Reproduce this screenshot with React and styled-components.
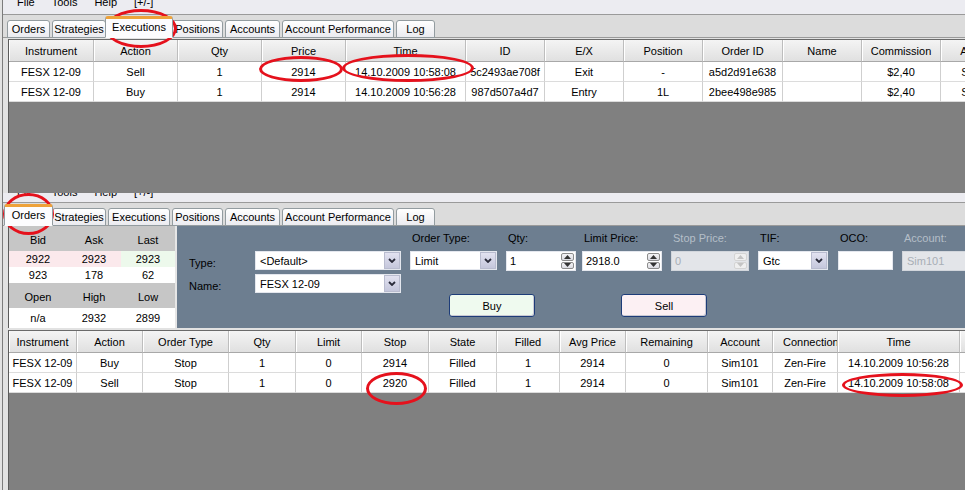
import React from 'react';
import styled, { createGlobalStyle } from 'styled-components';

const GlobalStyle = createGlobalStyle`
  *, *::before, *::after { box-sizing: border-box; }
  html, body { margin: 0; padding: 0; }
  body {
    font-family: "Liberation Sans", Arial, sans-serif;
    font-size: 11px;
    color: #000;
    background: #e2e2e2;
  }
`;

const execColumns = [
  { h: 'Instrument', w: 85 },
  { h: 'Action', w: 84 },
  { h: 'Qty', w: 84 },
  { h: 'Price', w: 84 },
  { h: 'Time', w: 120 },
  { h: 'ID', w: 79 },
  { h: 'E/X', w: 79 },
  { h: 'Position', w: 79 },
  { h: 'Order ID', w: 80 },
  { h: 'Name', w: 79 },
  { h: 'Commission', w: 79 },
  { h: 'Account', w: 79 },
];

const execRows = [
  ['FESX 12-09', 'Sell', '1', '2914', '14.10.2009 10:58:08', '5c2493ae708f', 'Exit', '-', 'a5d2d91e638', '', '$2,40', 'Sim101'],
  ['FESX 12-09', 'Buy', '1', '2914', '14.10.2009 10:56:28', '987d507a4d7', 'Entry', '1L', '2bee498e985', '', '$2,40', 'Sim101'],
];

const orderColumns = [
  { h: 'Instrument', w: 68 },
  { h: 'Action', w: 66 },
  { h: 'Order Type', w: 86 },
  { h: 'Qty', w: 67 },
  { h: 'Limit', w: 66 },
  { h: 'Stop', w: 67 },
  { h: 'State', w: 68 },
  { h: 'Filled', w: 63 },
  { h: 'Avg Price', w: 66 },
  { h: 'Remaining', w: 82 },
  { h: 'Account', w: 65 },
  { h: 'Connection', w: 65, clip: true },
  { h: 'Time', w: 122 },
  { h: '', w: 40 },
];

const orderRows = [
  ['FESX 12-09', 'Buy', 'Stop', '1', '0', '2914', 'Filled', '1', '2914', '0', 'Sim101', 'Zen-Fire', '14.10.2009 10:56:28', ''],
  ['FESX 12-09', 'Sell', 'Stop', '1', '0', '2920', 'Filled', '1', '2914', '0', 'Sim101', 'Zen-Fire', '14.10.2009 10:58:08', ''],
];

const tabs = [
  { label: 'Orders', w: 43 },
  { label: 'Strategies', w: 54 },
  { label: 'Executions', w: 62 },
  { label: 'Positions', w: 51 },
  { label: 'Accounts', w: 55 },
  { label: 'Account Performance', w: 112 },
  { label: 'Log', w: 39 },
];

const menu = ['File', 'Tools', 'Help', '[+/-]'];

const Screen = styled.div`
  position: relative;
  width: 965px;
  height: 490px;
  overflow: hidden;
  background: #e2e2e2;
`;

const Frame = styled.div`
  height: 100%;
  margin-left: 2px;
  border-left: 1px solid #7c7c7c;
  display: flex;
  flex-direction: column;
`;

const Window = styled.section`
  display: flex;
  flex-direction: column;
  ${(p) => (p.$height ? `height: ${p.$height}px; flex: none;` : 'flex: 1; min-height: 0;')}
`;

const MenuBar = styled.div`
  flex: none;
  height: ${(p) => p.$h}px;
  background: #ececf1;
  border-bottom: 1px solid #9a9a9a;
  overflow: hidden;
  display: flex;
  gap: 17px;
  padding-left: 14px;
`;

const MenuItem = styled.span`
  margin-top: ${(p) => p.$shift}px;
  line-height: 13px;
  white-space: nowrap;
`;

const TabStrip = styled.div`
  flex: none;
  height: 23px;
  background: #dcdcdc;
  border-bottom: 1px solid #9a9a9a;
  display: flex;
  align-items: flex-end;
  gap: 2px;
  padding-left: 4px;
`;

const Tab = styled.div`
  flex: none;
  width: ${(p) => p.$w + (p.$active ? 6 : 0)}px;
  height: ${(p) => (p.$active ? 22 : 18)}px;
  margin: 0 ${(p) => (p.$active ? -3 : 0)}px -1px;
  display: flex;
  align-items: center;
  justify-content: center;
  white-space: nowrap;
  background: ${(p) => (p.$active ? '#fcfcfe' : 'linear-gradient(#ffffff, #ebebf0)')};
  border: 1px solid #939ca0;
  border-top: ${(p) => (p.$active ? '3px solid #eea23a' : '1px solid #939ca0')};
  border-bottom: ${(p) => (p.$active ? '1px solid #fcfcfe' : '1px solid #939ca0')};
  border-radius: 3px 3px 0 0;
  position: relative;
  z-index: ${(p) => (p.$active ? 1 : 0)};
  padding-bottom: ${(p) => (p.$active ? 2 : 0)}px;
`;

const Well = styled.div`
  flex: 1;
  min-height: 0;
  margin: ${(p) => p.$top}px 0 0 5px;
  background: #808080;
  border-left: 1px solid #5b5b5b;
  border-top: 1px solid #6a6a6a;
  overflow: hidden;
`;

const Grid = styled.table`
  border-collapse: separate;
  border-spacing: 0;
  table-layout: fixed;
  width: ${(p) => p.$width}px;
  background: #fff;
`;

const HeadCell = styled.th`
  height: 22px;
  padding: ${(p) => (p.$clip ? '0 0 0 10px' : '0 2px')};
  font-weight: normal;
  text-align: ${(p) => (p.$clip ? 'left' : 'center')};
  white-space: nowrap;
  overflow: hidden;
  background: linear-gradient(#f4f4f4, #e0e0e0);
  border-right: 1px solid #bdbdbd;
  border-bottom: 1px solid #a8a8a8;
  box-shadow: inset 1px 0 #ffffff;
`;

const Cell = styled.td`
  height: 20px;
  padding: 0 2px;
  text-align: center;
  white-space: nowrap;
  overflow: hidden;
  border-right: 1px solid #cfcfcf;
  border-bottom: 1px solid #dcdcdc;
`;

const OrderRow = styled.div`
  flex: none;
  height: 102px;
  margin-left: 5px;
  border-left: 1px solid #5b5b5b;
  display: flex;
  gap: 2px;
  background: #e6e6e6;
`;

const QuoteBox = styled.div`
  flex: none;
  width: 166px;
  background: #fff;
  display: grid;
  grid-template-columns: 58px 54px 54px;
  grid-template-rows: 25px 16px 16px 25px 19px;
`;

const tones = {
  head: '#c6c6c6',
  bid: '#fbe9ec',
  last: '#edf9ec',
  plain: '#ffffff',
};

const QCell = styled.div`
  display: flex;
  align-items: center;
  justify-content: center;
  background: ${(p) => tones[p.$tone]};
  padding-top: ${(p) => (p.$tone === 'head' ? 3 : 0)}px;
`;

const EntryPanel = styled.div`
  flex: 1;
  min-width: 0;
  background: #6d7e90;
  padding: 5px 0 0 12px;
  display: flex;
  flex-direction: column;
  overflow: hidden;
`;

const TopRow = styled.div`
  display: flex;
  align-items: flex-start;
`;

const NameBlock = styled.div`
  flex: none;
  width: 212px;
  margin-top: 20px;
  display: grid;
  grid-template-columns: 66px 146px;
  row-gap: 4px;
`;

const SideLabel = styled.span`
  align-self: center;
  padding-top: 4px;
`;

const Field = styled.div`
  flex: none;
  width: ${(p) => p.$w}px;
  margin-left: ${(p) => p.$ml}px;
  display: flex;
  flex-direction: column;
  gap: 6px;
`;

const FieldLabel = styled.span`
  line-height: 14px;
  padding-left: 2px;
  white-space: nowrap;
  color: ${(p) => (p.$disabled ? '#b5bec8' : '#000')};
`;

const Combo = styled.div`
  height: 19px;
  display: flex;
  background: #fff;
  border: 1px solid #e4e7ee;
`;

const BoxText = styled.span`
  flex: 1;
  min-width: 0;
  display: flex;
  align-items: center;
  padding-left: ${(p) => p.$pad ?? 4}px;
  white-space: nowrap;
  overflow: hidden;
  color: ${(p) => (p.$disabled ? '#a8aeb6' : '#000')};
`;

const ComboButton = styled.span`
  flex: none;
  width: 16px;
  display: flex;
  align-items: center;
  justify-content: center;
  background: linear-gradient(#e2e2f0, #c5c7dc);
  border: 1px solid #b9bccf;
`;

const SpinBox = styled.div`
  height: 20px;
  display: flex;
  background: ${(p) => (p.$disabled ? '#e3e5e9' : '#fff')};
  border: 1px solid ${(p) => (p.$disabled ? '#d2d6dc' : '#e4e7ee')};
`;

const SpinButtons = styled.div`
  flex: none;
  width: 15px;
  padding: 1px;
  display: flex;
  flex-direction: column;
  gap: 1px;
`;

const SpinArrow = styled.span`
  flex: 1;
  display: flex;
  align-items: center;
  justify-content: center;
  border: 1px solid ${(p) => (p.$disabled ? '#d4d4d4' : '#8c8c8c')};
  border-radius: 2px;
  background: ${(p) => (p.$disabled ? '#efefef' : 'linear-gradient(#f4f4f6, #dcdce2)')};
`;

const ButtonRow = styled.div`
  display: flex;
  gap: 86px;
  padding-left: 260px;
  margin-top: 1px;
`;

const ActionButton = styled.button`
  width: 86px;
  height: 23px;
  padding: 0;
  font: inherit;
  color: #000;
  background: ${(p) => p.$tint};
  border: 1px solid #1d3c78;
  border-radius: 3px;
  box-shadow: inset -1px -1px #c9c9d2;
`;

const Mark = styled.div`
  position: absolute;
  left: ${(p) => p.$x}px;
  top: ${(p) => p.$y}px;
  width: ${(p) => p.$w}px;
  height: ${(p) => p.$h}px;
  border: 3px solid #e5111c;
  border-radius: 50%;
  pointer-events: none;
`;

const Chevron = () => (
  <svg width="8" height="5" viewBox="0 0 8 5">
    <path d="M1 1 L4 4 L7 1" fill="none" stroke="#2a2b3a" strokeWidth="1.8" />
  </svg>
);

const Arrow = ({ up, disabled }) => (
  <svg width="7" height="4" viewBox="0 0 7 4">
    <path d={up ? 'M0 4 L3.5 0 L7 4Z' : 'M0 0 L7 0 L3.5 4Z'} fill={disabled ? '#c4c4c4' : '#333'} />
  </svg>
);

const Select = ({ value }) => (
  <Combo>
    <BoxText>{value}</BoxText>
    <ComboButton>
      <Chevron />
    </ComboButton>
  </Combo>
);

const Spinner = ({ value, disabled }) => (
  <SpinBox $disabled={disabled}>
    <BoxText $pad={3} $disabled={disabled}>{value}</BoxText>
    <SpinButtons>
      <SpinArrow $disabled={disabled}><Arrow up disabled={disabled} /></SpinArrow>
      <SpinArrow $disabled={disabled}><Arrow disabled={disabled} /></SpinArrow>
    </SpinButtons>
  </SpinBox>
);

const Tabs = ({ active }) => (
  <TabStrip>
    {tabs.map((t) => (
      <Tab key={t.label} $w={t.w} $active={t.label === active}>
        {t.label}
      </Tab>
    ))}
  </TabStrip>
);

const DataGrid = ({ columns, rows }) => {
  const width = columns.reduce((s, c) => s + c.w, 0);
  return (
    <Grid $width={width}>
      <colgroup>
        {columns.map((c, i) => (
          <col key={i} style={{ width: c.w }} />
        ))}
      </colgroup>
      <thead>
        <tr>
          {columns.map((c, i) => (
            <HeadCell key={i} $clip={c.clip}>{c.h}</HeadCell>
          ))}
        </tr>
      </thead>
      <tbody>
        {rows.map((r, ri) => (
          <tr key={ri}>
            {r.map((v, ci) => (
              <Cell key={ci}>{v}</Cell>
            ))}
          </tr>
        ))}
      </tbody>
    </Grid>
  );
};

const App = () => {
  return (
    <Screen>
      <GlobalStyle />
      <Frame>
        <Window $height={193}>
          <MenuBar $h={15}>
            {menu.map((m) => (
              <MenuItem key={m} $shift={-4}>{m}</MenuItem>
            ))}
          </MenuBar>
          <Tabs active="Executions" />
          <Well $top={1}>
            <DataGrid columns={execColumns} rows={execRows} />
          </Well>
        </Window>

        <Window>
          <MenuBar $h={10}>
            {menu.map((m) => (
              <MenuItem key={m} $shift={-7}>{m}</MenuItem>
            ))}
          </MenuBar>
          <Tabs active="Orders" />
          <OrderRow>
            <QuoteBox>
              <QCell $tone="head">Bid</QCell>
              <QCell $tone="head">Ask</QCell>
              <QCell $tone="head">Last</QCell>
              <QCell $tone="bid">2922</QCell>
              <QCell $tone="bid">2923</QCell>
              <QCell $tone="last">2923</QCell>
              <QCell $tone="plain">923</QCell>
              <QCell $tone="plain">178</QCell>
              <QCell $tone="plain">62</QCell>
              <QCell $tone="head">Open</QCell>
              <QCell $tone="head">High</QCell>
              <QCell $tone="head">Low</QCell>
              <QCell $tone="plain">n/a</QCell>
              <QCell $tone="plain">2932</QCell>
              <QCell $tone="plain">2899</QCell>
            </QuoteBox>

            <EntryPanel>
              <TopRow>
                <NameBlock>
                  <SideLabel>Type:</SideLabel>
                  <Select value="<Default>" />
                  <SideLabel>Name:</SideLabel>
                  <Select value="FESX 12-09" />
                </NameBlock>
                <Field $w={87} $ml={9}>
                  <FieldLabel>Order Type:</FieldLabel>
                  <Select value="Limit" />
                </Field>
                <Field $w={70} $ml={9}>
                  <FieldLabel>Qty:</FieldLabel>
                  <Spinner value="1" />
                </Field>
                <Field $w={80} $ml={6}>
                  <FieldLabel>Limit Price:</FieldLabel>
                  <Spinner value="2918.0" />
                </Field>
                <Field $w={78} $ml={9}>
                  <FieldLabel $disabled>Stop Price:</FieldLabel>
                  <Spinner value="0" disabled />
                </Field>
                <Field $w={70} $ml={9}>
                  <FieldLabel>TIF:</FieldLabel>
                  <Select value="Gtc" />
                </Field>
                <Field $w={55} $ml={10}>
                  <FieldLabel>OCO:</FieldLabel>
                  <Combo />
                </Field>
                <Field $w={70} $ml={9}>
                  <FieldLabel $disabled>Account:</FieldLabel>
                  <SpinBox $disabled>
                    <BoxText $disabled>Sim101</BoxText>
                  </SpinBox>
                </Field>
              </TopRow>
              <ButtonRow>
                <ActionButton $tint="#effaef">Buy</ActionButton>
                <ActionButton $tint="#fcf0f3">Sell</ActionButton>
              </ButtonRow>
            </EntryPanel>
          </OrderRow>
          <Well $top={2}>
            <DataGrid columns={orderColumns} rows={orderRows} />
          </Well>
        </Window>
      </Frame>

      <Mark $x={105} $y={9} $w={72} $h={39} />
      <Mark $x={259} $y={56} $w={84} $h={26} />
      <Mark $x={342} $y={54} $w={132} $h={28} />
      <Mark $x={3} $y={193} $w={51} $h={42} />
      <Mark $x={366} $y={372} $w={61} $h={33} />
      <Mark $x={842} $y={373} $w={121} $h={24} />
    </Screen>
  );
};

export default App;
